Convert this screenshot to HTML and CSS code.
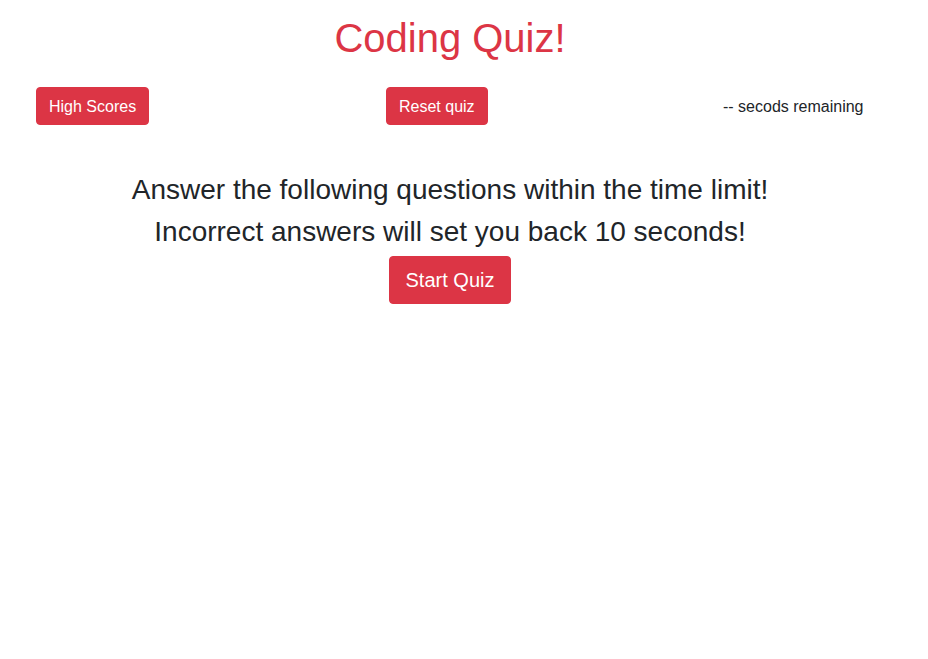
FILE: index.html
```html
<!DOCTYPE html>
<html lang="en">
<head>
<meta charset="utf-8">
<title>Coding Quiz!</title>
<link rel="stylesheet" href="styles.css">
</head>
<body>
<div class="page">
  <h1 class="title">Coding Quiz!</h1>
  <div class="nav">
    <div class="nav-col"><button class="btn">High Scores</button></div>
    <div class="nav-col"><button class="btn">Reset quiz</button></div>
    <div class="nav-col timer">-- secods remaining</div>
  </div>
  <div class="intro">
    <h3 class="intro-line">Answer the following questions within the time limit!</h3>
    <h3 class="intro-line">Incorrect answers will set you back 10 seconds!</h3>
    <button class="btn btn-lg">Start Quiz</button>
  </div>
</div>
</body>
</html>
```

FILE: styles.css
```css
* { box-sizing: border-box; }
html, body { margin: 0; padding: 0; background: #fff; }
body {
  font-family: "Liberation Sans", Arial, sans-serif;
  font-size: 16px;
  line-height: 1.5;
  color: #212529;
}
.page {
  width: 900px;
}
.title {
  margin: 14px 0 0;
  font-size: 40px;
  font-weight: 400;
  line-height: 1.2;
  color: #dc3545;
  text-align: center;
}
.nav {
  display: grid;
  grid-template-columns: 350px 337px auto;
  padding-left: 36px;
  margin-top: 25px;
  align-items: start;
}
.timer {
  line-height: 37px;
  padding-top: 1px;
}
.btn {
  display: inline-block;
  font-family: inherit;
  font-size: 16px;
  line-height: 1.5;
  padding: 7px 12px 5px;
  color: #fff;
  background: #dc3545;
  border: 1px solid #dc3545;
  border-radius: 4px;
  cursor: pointer;
}
.btn-lg {
  font-size: 20px;
  padding: 8px 16px;
  border-radius: 4px;
}
.intro {
  margin-top: 48px;
  text-align: center;
}
.intro-line {
  margin: 0 0 8px;
  font-size: 28px;
  font-weight: 400;
  line-height: 1.2;
}
```
